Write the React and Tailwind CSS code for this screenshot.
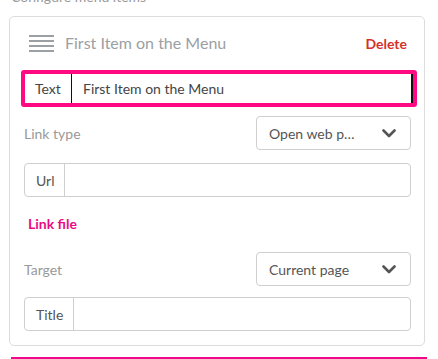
import React from "react";

const font = { };

function Chevron() {
  return (
    <svg width="14" height="9" viewBox="0 0 14 9" fill="none">
      <path d="M1.5 1.5 L7 7 L12.5 1.5" stroke="#555" strokeWidth="2.6" strokeLinecap="round" strokeLinejoin="round" />
    </svg>
  );
}

function SelectBox({ value }) {
  return (
    <div className="w-[155px] h-[34px] border border-[#cfcfcf] rounded-[4px] flex items-center justify-between pl-[12px] pr-[14px] text-[14px] text-[#555]">
      <span>{value}</span>
      <Chevron />
    </div>
  );
}

function InputGroup({ label, labelW }) {
  return (
    <div className="h-[34px] border border-[#cfcfcf] rounded-[4px] flex items-stretch text-[14px] text-[#555]">
      <div className={`${labelW} border-r border-[#cfcfcf] flex items-center pl-[11px]`}>{label}</div>
      <div className="flex-1" />
    </div>
  );
}

export default function App() {
  return (
    <div className="w-[438px] h-[359px] overflow-hidden bg-white font-['Lato',sans-serif]">
      <div className="px-[9px]">
        <div className="-mt-[13px] h-[20px] leading-[20px] pl-[2px] text-[14px] text-[#999]">Configure menu items</div>
        <div className="mt-[9px] w-[416px] border border-[#dcdcdc] rounded-[5px] pt-[14px] pb-[14px] pl-[14px] pr-[13px]">
          <div className="h-[24px] flex items-center justify-between">
            <div className="flex items-center">
              <div className="ml-[5px] w-[25px] flex flex-col gap-[3px]">
                <div className="h-[2px] bg-[#9aa0a3]" />
                <div className="h-[2px] bg-[#9aa0a3]" />
                <div className="h-[2px] bg-[#9aa0a3]" />
                <div className="h-[2px] bg-[#9aa0a3]" />
              </div>
              <span className="ml-[11px] text-[16px] text-[#9aa0a3]">First Item on the Menu</span>
            </div>
            <span className="mr-[4px] text-[14px] font-bold text-[#d4312c]">Delete</span>
          </div>

          <div className="mt-[15px] -ml-[3px] w-[396px] h-[37px] border-[4px] border-[#ff0a82] rounded-[3px] flex items-stretch text-[14px] text-[#444] bg-white">
            <div className="w-[47px] border-r-[1.5px] border-[#111] flex items-center pl-[10px]">Text</div>
            <div className="flex-1 flex items-center pl-[11px] border-r-[2px] border-[#111]">First Item on the Menu</div>
          </div>

          <div className="mt-[9px] flex items-center justify-between">
            <span className="text-[14px] text-[#999]">Link type</span>
            <SelectBox value="Open web p…" />
          </div>

          <div className="mt-[13px]">
            <InputGroup label="Url" labelW="w-[40px]" />
          </div>

          <div className="mt-[17px] h-[20px] leading-[20px] pl-[4px] text-[14px] font-bold text-[#ec0a84]">Link file</div>

          <div className="mt-[18px] flex items-center justify-between">
            <span className="text-[14px] text-[#999]">Target</span>
            <SelectBox value="Current page" />
          </div>

          <div className="mt-[11px]">
            <InputGroup label="Title" labelW="w-[49px]" />
          </div>
        </div>
        <div className="mt-[11px] mx-[2px] h-[2px] bg-[#f0078a]" />
      </div>
    </div>
  );
}
